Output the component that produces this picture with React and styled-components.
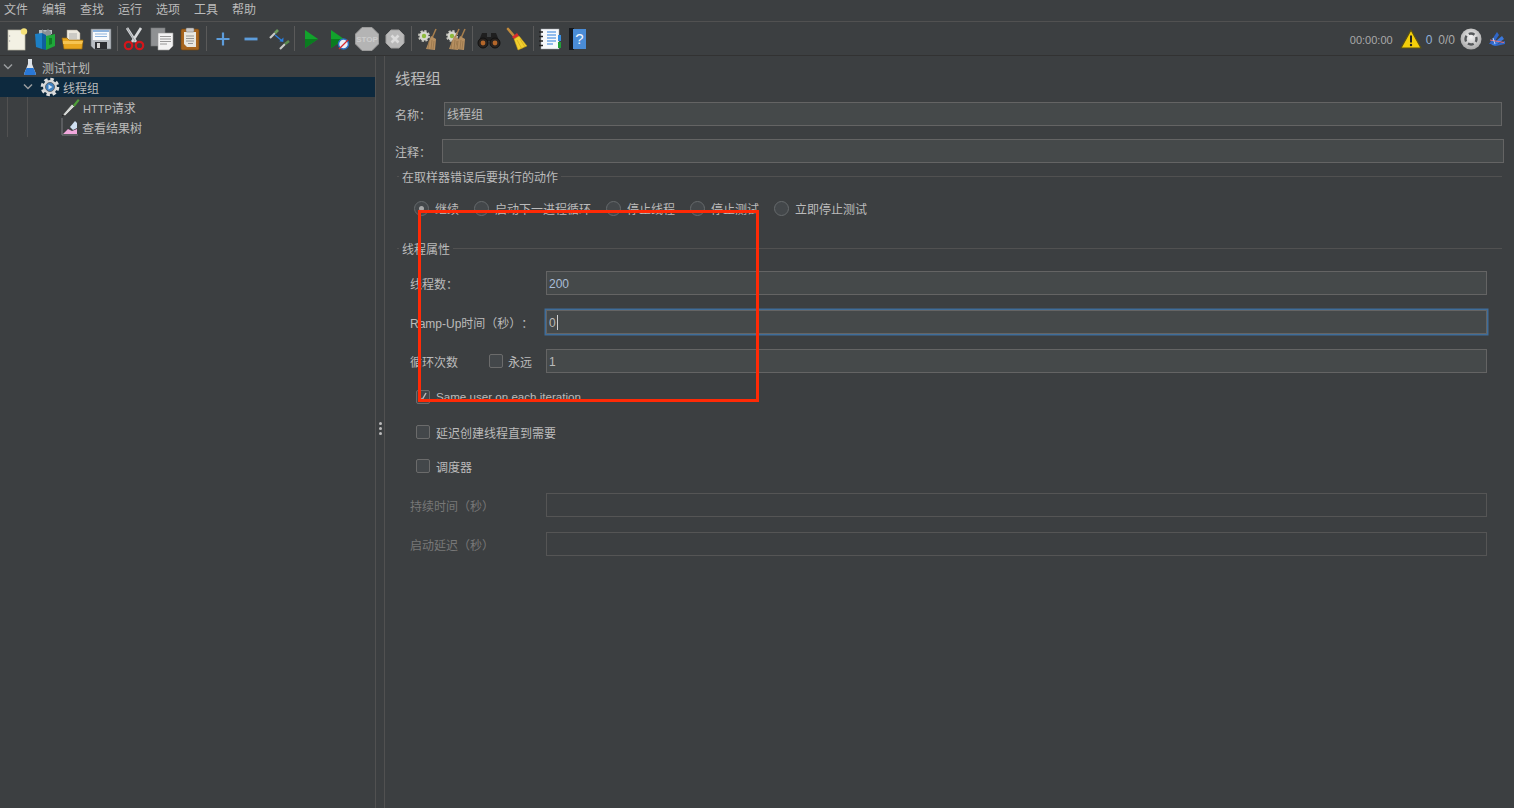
import React from 'react';
import styled, { createGlobalStyle } from 'styled-components';

const GlobalStyle = createGlobalStyle`
html, body {
    margin: 0;
    height: 100%;
    background: #3c3f41;
}
body {
    font-family: "Liberation Sans", "Noto Sans CJK SC", sans-serif;
    font-size: 12px;
    color: #bbbbbb;
    overflow: hidden;
    text-spacing-trim: space-all;
}
`;

const Frame = styled.div`
position: relative;
width: 1514px;
height: 808px;
display: flex;
flex-direction: column;
background: #3c3f41;
`;

const MenuBar = styled.div`
height: 21px;
display: flex;
align-items: center;
gap: 14px;
padding-left: 4px;
border-bottom: 1px solid #515151;
`;

const MenuItem = styled.span`
line-height: 21px;
`;

const ToolBar = styled.div`
height: 33px;
display: flex;
align-items: center;
padding-left: 3px;
border-bottom: 1px solid #323232;
`;

const ToolButton = styled.div`
width: 28px;
height: 28px;
flex: none;
display: flex;
align-items: center;
justify-content: center;
`;

const ToolSep = styled.div`
width: 1px;
height: 25px;
margin: 0 1.9px;
background: #5a5a5a;
`;

const Status = styled.div`
margin-left: auto;
display: flex;
align-items: center;
padding-right: 8px;
`;

const Timer = styled.span`
font-size: 11px;
margin-right: 7px;
padding-top: 2px;
color: #a9a9a9;
`;

const Count = styled.span`
margin-left: ${p => p.$left}px;
margin-right: ${p => p.$right || 0}px;
padding-top: 2px;
color: ${p => p.$blue ? '#8fb0d8' : '#a9a9a9'};
`;

const WingSlot = styled.span`
display: flex;
margin-left: 6px;
`;

const Main = styled.div`
flex: 1;
display: flex;
min-height: 0;
`;

const Tree = styled.div`
width: 375px;
flex: none;
padding-top: 1px;
`;

const TreeRow = styled.div`
height: 20px;
display: flex;
align-items: center;
padding-left: ${p => p.$indent}px;
background: ${p => p.$selected ? '#0d293e' : 'transparent'};
`;

const TreeGuide = styled.div`
margin-left: ${p => p.$left}px;
padding-left: ${p => p.$pad}px;
border-left: 1px solid #515151;
`;

const TreeLabel = styled.span`
display: inline-flex;
align-items: baseline;
margin-left: ${p => p.$gap}px;
white-space: nowrap;
`;

const Latin = styled.span`
font-size: ${p => p.$size}px;
`;

const RaisedText = styled.span`
font-size: 11.6px;
margin-bottom: 2px;
`;

const Splitter = styled.div`
width: 8px;
flex: none;
border-left: 1px solid #515151;
border-right: 1px solid #515151;
display: flex;
flex-direction: column;
align-items: center;
justify-content: center;
gap: 2px;
padding-bottom: 8px;
`;

const Dot = styled.i`
width: 3px;
height: 3px;
border-radius: 50%;
background: #bbbbbb;
`;

const Panel = styled.div`
flex: 1;
min-width: 0;
padding: 0 12px 0 10px;
`;

const Title = styled.div`
font-size: 15.3px;
line-height: 22px;
margin: 12px 0 12px;
`;

const NameRow = styled.div`
display: flex;
align-items: center;
height: 24px;
margin-bottom: ${p => p.$bottom}px;
margin-right: ${p => p.$right}px;
`;

const NameLabel = styled.span`
width: ${p => p.$width}px;
flex: none;
`;

const Field = styled.div`
box-sizing: border-box;
flex: 1;
min-width: 0;
height: 24px;
line-height: ${p => p.$tall ? 25 : 24}px;
padding-left: 2px;
background: ${p => p.$disabled ? 'transparent' : '#45494a'};
border: 1px solid ${p => p.$disabled ? '#555555' : '#646464'};
box-shadow: ${p => p.$focus ? '0 0 0 1.5px #3f6d9a' : 'none'};
color: ${p => p.$blue ? '#a9bdd6' : '#bbbbbb'};
`;

const Caret = styled.span`
display: inline-block;
width: 1px;
height: 15px;
margin-left: 1px;
vertical-align: -3px;
background: #d0d0d0;
`;

const Legend = styled.div`
display: flex;
align-items: center;
height: 16px;
margin-top: ${p => p.$top}px;
margin-left: 2px;
gap: 3px;
&::before {
    content: "";
    width: 2px;
    height: 1px;
    background: #515151;
}
&::after {
    content: "";
    flex: 1;
    height: 1px;
    background: #515151;
}
`;

const RadioRow = styled.div`
display: flex;
align-items: center;
height: 16px;
margin-top: 16px;
padding-left: 19px;
gap: 15px;
`;

const RadioItem = styled.div`
display: flex;
align-items: center;
gap: 6px;
white-space: nowrap;
`;

const RadioMark = styled.span`
box-sizing: border-box;
width: 15px;
height: 15px;
border-radius: 50%;
border: 1px solid #666a6c;
background: #43474a;
display: flex;
align-items: center;
justify-content: center;
&::after {
    content: "";
    display: ${p => p.$on ? 'block' : 'none'};
    width: 5px;
    height: 5px;
    border-radius: 50%;
    background: #a8a8a8;
}
`;

const FormRow = styled.div`
display: grid;
grid-template-columns: 136px 1fr;
align-items: center;
height: 24px;
margin-top: ${p => p.$top}px;
margin-left: 15px;
margin-right: 15px;
color: ${p => p.$disabled ? '#777777' : '#bbbbbb'};
`;

const LoopLabel = styled.div`
display: flex;
align-items: center;
`;

const LoopText = styled.span`
width: 79px;
`;

const CheckRow = styled.div`
display: flex;
align-items: center;
height: 16px;
margin-top: ${p => p.$top}px;
padding-left: 21px;
gap: 6px;
white-space: nowrap;
`;

const CheckBox = styled.span`
box-sizing: border-box;
width: 14px;
height: 14px;
flex: none;
border: 1px solid #6b6b6b;
border-radius: 2px;
background: #43474a;
margin-right: ${p => p.$right || 0}px;
display: flex;
align-items: center;
justify-content: center;
`;

const RedBox = styled.div`
position: absolute;
left: 418px;
top: 210px;
width: 341px;
height: 192px;
box-sizing: border-box;
border: 3px solid #ff2a06;
pointer-events: none;
`;

const NewIcon = () => (
    <svg width="22" height="24" viewBox="0 0 22 24">
        <rect x="2" y="3" width="17" height="20" fill="#f3f1e4" stroke="#bdbbaa" strokeWidth=".7" />
        <circle cx="3.6" cy="9" r=".7" fill="#aaa" /><circle cx="3.6" cy="14" r=".7" fill="#aaa" />
        <circle cx="18" cy="4.5" r="3.2" fill="#f5e27a" />
    </svg>
);

const TemplatesIcon = () => (
    <svg width="24" height="24" viewBox="0 0 24 24">
        <path d="M6 3h13v4H6z" fill="#b7bcc0" />
        <path d="M9 2l3 3 3-3 3 3v4H9z" fill="#8b9296" />
        <path d="M2 7l7-1v16l-6-2z" fill="#1c7fc4" />
        <path d="M9 6l4 2v15l-4-1z" fill="#0f5f9c" />
        <path d="M13 9l9-2v12l-9 4z" fill="#1fa83a" />
        <path d="M16 11h3v6l-3 1z" fill="#0f7d25" />
    </svg>
);

const OpenIcon = () => (
    <svg width="24" height="24" viewBox="0 0 24 24">
        <path d="M6 3h10l3 3v8H6z" fill="#ece9df" stroke="#a59f8c" strokeWidth=".5" />
        <path d="M8 7h8M8 9h8M8 11h8" stroke="#9c9c9c" strokeWidth=".8" />
        <path d="M1 11h5l2 2h14l-1 9H3z" fill="#e8a71f" stroke="#9a6a10" strokeWidth=".7" />
        <path d="M2 14h20l-1 3H2z" fill="#f6c552" />
    </svg>
);

const SaveIcon = () => (
    <svg width="24" height="24" viewBox="0 0 24 24">
        <path d="M2 2h20v20H5l-3-3z" fill="#b9bec4" stroke="#6d7278" strokeWidth=".6" />
        <rect x="4" y="3" width="16" height="10" fill="#fafbfc" />
        <path d="M4 3h16v2H4z" fill="#8db3dd" />
        <path d="M6 7h12M6 9.500h12" stroke="#8db3dd" />
        <rect x="6" y="15" width="12" height="7" fill="#2d2f33" />
        <rect x="8" y="16" width="3" height="5" fill="#d5d5d5" />
    </svg>
);

const CutIcon = () => (
    <svg width="24" height="24" viewBox="0 0 24 24">
        <path d="M5 1l9 14M19 1l-9 14" stroke="#d6d8da" strokeWidth="2.6" fill="none" />
        <path d="M5 1l8 13" stroke="#8b8f93" strokeWidth=".7" fill="none" />
        <circle cx="6.500" cy="18.500" r="3.700" fill="none" stroke="#d3161b" strokeWidth="2.200" />
        <circle cx="17.500" cy="18.500" r="3.700" fill="none" stroke="#d3161b" strokeWidth="2.200" />
    </svg>
);

const CopyIcon = () => (
    <svg width="24" height="24" viewBox="0 0 24 24">
        <rect x="1" y="1" width="14" height="18" fill="#8f9193" stroke="#77797b" strokeWidth=".6" />
        <path d="M8 6h15v13l-4 4H8z" fill="#f3f3f3" stroke="#9a9a9a" strokeWidth=".6" />
        <path d="M10 9.500h11M10 12h11M10 14.500h11M10 17h7" stroke="#8d8d8d" strokeWidth=".9" />
    </svg>
);

const PasteIcon = () => (
    <svg width="22" height="24" viewBox="0 0 22 24">
        <rect x="2" y="2" width="18" height="21" rx="1.500" fill="#a7641c" stroke="#6d4312" strokeWidth=".6" />
        <path d="M5 5h12v15H8l-3-3z" fill="#e9e7df" />
        <rect x="7" y="1" width="8" height="4" rx="1" fill="#c9c9c9" stroke="#777" strokeWidth=".5" />
        <path d="M7 9h8M7 11.500h8M7 14h8M9 16.500h5" stroke="#8d8d8d" strokeWidth=".9" />
    </svg>
);

const PlusIcon = () => (
    <svg width="16" height="16" viewBox="0 0 16 16">
        <path d="M8 1.500v13M1.500 8h13" stroke="#5d9ddb" strokeWidth="2.200" />
    </svg>
);

const MinusIcon = () => (
    <svg width="16" height="16" viewBox="0 0 16 16">
        <path d="M1.500 8h13" stroke="#5d9ddb" strokeWidth="2.800" />
    </svg>
);

const ToggleIcon = () => (
    <svg width="24" height="24" viewBox="0 0 24 24">
        <path d="M3 11l5-5" stroke="#c9cbc8" strokeWidth="2.200" />
        <path d="M8 6l3-3" stroke="#6c9c5c" strokeWidth="2.600" />
        <path d="M13 22l5-5" stroke="#c9cbc8" strokeWidth="2.200" />
        <path d="M18 17l4-3" stroke="#5d8c50" strokeWidth="2.600" />
        <path d="M8 8l6 5" stroke="#2a7fe0" strokeWidth="1.200" />
        <path d="M16.500 10.500l-.2 4.500-4-.7z" fill="#2a7fe0" />
    </svg>
);

const PlayIcon = () => (
    <svg width="24" height="24" viewBox="0 0 24 24">
        <path d="M6 3l13 9-13 9z" fill="#12a32c" />
        <path d="M6 12h13l-13 9z" fill="#0a7c1f" />
    </svg>
);

const PlayNoTimerIcon = () => (
    <svg width="24" height="24" viewBox="0 0 24 24">
        <path d="M4 3l13 9-13 9z" fill="#12a32c" />
        <path d="M4 12h13l-13 9z" fill="#0a7c1f" />
        <circle cx="16.500" cy="17" r="5" fill="#e8eef6" stroke="#2a6fc0" strokeWidth="1.500" />
        <path d="M12 22l9-9" stroke="#d8262b" strokeWidth="1.300" />
    </svg>
);

const StopIcon = () => (
    <svg width="24" height="24" viewBox="0 0 24 24">
        <path d="M7 .500h10l6.500 6.500v10l-6.500 6.500H7L.500 17V7z" fill="#b4b4b4" stroke="#9a9a9a" />
        <text x="12" y="15" textAnchor="middle" fontSize="8" fontWeight="700" fill="#cdcdcd" fontFamily="Liberation Sans, sans-serif">STOP</text>
    </svg>
);

const ShutdownIcon = () => (
    <svg width="20" height="20" viewBox="0 0 20 20">
        <path d="M6 1h8l5 5v8l-5 5H6l-5-5V6z" fill="#b9b9b9" stroke="#a0a0a0" />
        <path d="M6.500 6.500l7 7M13.500 6.500l-7 7" stroke="#dcdcdc" strokeWidth="2.600" />
    </svg>
);

const Broom = ({ x = 0 }) => (
    <g transform={`translate(${x} 0)`}>
        <path d="M20 2l-4 9" stroke="#a97f4d" strokeWidth="1.500" />
        <path d="M15 9l5 3-1 11-9-1z" fill="#b68f60" />
        <path d="M13 14l-1 8M16 13l-1 9M18 14l-1 8" stroke="#8a6a42" strokeWidth=".6" />
    </g>
);

const SmallGear = () => (
    <g>
        <circle cx="8" cy="9" r="4.500" fill="#d8d8d0" stroke="#c8c8c0" strokeWidth="3" strokeDasharray="2 1.500" />
        <circle cx="8" cy="9" r="4" fill="#d8d8d0" />
        <circle cx="8" cy="9" r="2.200" fill="#8dbb3c" />
    </g>
);

const ClearIcon = () => (
    <svg width="24" height="24" viewBox="0 0 24 24"><SmallGear /><Broom /></svg>
);

const ClearAllIcon = () => (
    <svg width="24" height="24" viewBox="0 0 24 24"><SmallGear /><Broom x={-5} /><Broom x={1} /></svg>
);

const BinocularsIcon = () => (
    <svg width="24" height="24" viewBox="0 0 24 24">
        <path d="M5 6h5v4h4V6h5l4 10H14v-2h-4v2H1z" fill="#1f1f1f" />
        <circle cx="6" cy="16" r="5" fill="#2a2420" stroke="#111" />
        <circle cx="18" cy="16" r="5" fill="#2a2420" stroke="#111" />
        <circle cx="6" cy="16" r="2.400" fill="#b5672a" />
        <circle cx="18" cy="16" r="2.400" fill="#b5672a" />
    </svg>
);

const SweepIcon = () => (
    <svg width="24" height="24" viewBox="0 0 24 24">
        <path d="M3 2l6 7" stroke="#c08a3c" strokeWidth="2.600" strokeLinecap="round" />
        <path d="M7 10l5-4 2 3-5 3z" fill="#d92c2c" />
        <path d="M9 12l5-3 8 10-9 4z" fill="#f2cf2e" stroke="#c9a012" strokeWidth=".5" />
        <path d="M12 13l5 9M15 12l5 8" stroke="#c9a012" strokeWidth=".6" />
    </svg>
);

const FunctionIcon = () => (
    <svg width="24" height="24" viewBox="0 0 24 24">
        <rect x="3" y="2" width="18" height="20" fill="#f7f9fb" stroke="#9aa0a6" strokeWidth=".5" />
        <rect x="20" y="8" width="3" height="6" fill="#3a8ee0" />
        <rect x="20" y="15" width="3" height="6" fill="#22a03a" />
        <path d="M9 5h9M9 8h9M9 11h9M9 14h9M9 17h6" stroke="#2d7fdc" strokeWidth="1.100" />
        <path d="M1 5h4M1 9.500h4M1 14h4M1 18.500h4" stroke="#222" strokeWidth="1.600" />
    </svg>
);

const HelpIcon = () => (
    <svg width="20" height="24" viewBox="0 0 20 24">
        <rect x="1" y="1" width="5" height="22" fill="#15181c" />
        <rect x="5" y="2" width="13" height="20" fill="#4a8cd6" />
        <text x="11.500" y="17" textAnchor="middle" fontSize="15" fill="#f2f6fb" fontFamily="Liberation Sans, sans-serif">?</text>
    </svg>
);

const WarnIcon = () => (
    <svg width="22" height="20" viewBox="0 0 22 20">
        <path d="M11 1l10 18H1z" fill="#f4cf0a" stroke="#5b5212" strokeWidth="1.200" strokeLinejoin="round" />
        <path d="M11 6.500v7" stroke="#222" strokeWidth="2" />
        <circle cx="11" cy="16" r="1.200" fill="#222" />
    </svg>
);

const DiscIcon = () => (
    <svg width="22" height="22" viewBox="0 0 22 22">
        <defs>
            <radialGradient id="discFill" cx="50%" cy="40%" r="60%">
                <stop offset="0%" stopColor="#f4f4f4" />
                <stop offset="100%" stopColor="#a8a8a8" />
            </radialGradient>
        </defs>
        <circle cx="11" cy="11" r="10.500" fill="url(#discFill)" />
        <circle cx="11" cy="11" r="5.500" fill="none" stroke="#55585a" strokeWidth="2.400" strokeDasharray="6 2.640" strokeDashoffset="3" />
    </svg>
);

const WingIcon = () => (
    <svg width="18" height="18" viewBox="0 0 18 18">
        <path d="M1 14L9 2l2 3-6 9z" fill="#2f66c8" />
        <path d="M3 15L14 6l2 3-8 6z" fill="#3b78dc" />
        <path d="M4 16l13-5v3l-9 2z" fill="#2f66c8" />
        <path d="M2 10l14 2.500" stroke="#e2707a" strokeWidth="1" />
        <path d="M5 8l2 6" stroke="#dfe7f5" strokeWidth=".8" />
    </svg>
);

const Chevron = styled.svg`
width: 10px;
height: 8px;
flex: none;
`;

const ExpandIcon = () => (
    <Chevron viewBox="0 0 10 8">
        <path d="M1 1.500l4 4 4-4" fill="none" stroke="#9a9d9f" strokeWidth="1.500" />
    </Chevron>
);

const FlaskIcon = () => (
    <svg width="14" height="18" viewBox="0 0 14 18">
        <path d="M5 1h4v5l4 10-1 1H2l-1-1 4-10z" fill="#dfe3e8" />
        <path d="M3.500 10h7l2.500 6-1 1H2l-1-1z" fill="#2a78d6" />
    </svg>
);

const GearIcon = () => (
    <svg width="20" height="20" viewBox="0 0 20 20">
        <circle cx="10" cy="10" r="7.500" fill="none" stroke="#dcdcdc" strokeWidth="3.600" strokeDasharray="3.300 2.600" />
        <circle cx="10" cy="10" r="7" fill="#d8d8d8" />
        <circle cx="10" cy="10" r="4.500" fill="#3f7fbe" stroke="#5c6770" />
        <path d="M8.500 7.500l4 2.500-4 2.500z" fill="#d6e6f5" />
    </svg>
);

const PipetteIcon = () => (
    <svg width="19" height="19" viewBox="0 0 19 19">
        <path d="M1 18l3-2" stroke="#1d1d1d" strokeWidth="1" />
        <path d="M2 16.500L11 6l2.500 2.500L4 18z" fill="#d5d8d6" stroke="#2e2e2e" strokeWidth=".6" />
        <path d="M12 7l5-6 1.500 1.500-5 6.500z" fill="#4f9f3a" />
    </svg>
);

const GraphIcon = () => (
    <svg width="18" height="18" viewBox="0 0 18 18">
        <path d="M1 0v17h16" fill="none" stroke="#7a7d80" strokeWidth="1" />
        <path d="M2 16l5-5 4 2 5-2v5z" fill="#f0a8dc" />
        <path d="M9 9l5-6 2 2v5l-4 2z" fill="#cfe0f2" />
    </svg>
);

const toolGroups = [
    [NewIcon, TemplatesIcon, OpenIcon, SaveIcon],
    [CutIcon, CopyIcon, PasteIcon],
    [PlusIcon, MinusIcon, ToggleIcon],
    [PlayIcon, PlayNoTimerIcon, StopIcon, ShutdownIcon],
    [ClearIcon, ClearAllIcon],
    [BinocularsIcon, SweepIcon],
    [FunctionIcon, HelpIcon],
];

const menus = ['文件', '编辑', '查找', '运行', '选项', '工具', '帮助'];
const radios = ['继续', '启动下一进程循环', '停止线程', '停止测试', '立即停止测试'];

const App = () => (
    <Frame>
        <GlobalStyle />
        <MenuBar>
            {menus.map(m => <MenuItem key={m}>{m}</MenuItem>)}
        </MenuBar>
        <ToolBar>
            {toolGroups.map((group, i) => (
                <React.Fragment key={i}>
                    {i > 0 && <ToolSep />}
                    {group.map((Icon, j) => <ToolButton key={j}><Icon /></ToolButton>)}
                </React.Fragment>
            ))}
            <Status>
                <Timer>00:00:00</Timer>
                <WarnIcon />
                <Count $left={4} $blue>0</Count>
                <Count $left={6} $right={5}>0/0</Count>
                <DiscIcon />
                <WingSlot><WingIcon /></WingSlot>
            </Status>
        </ToolBar>
        <Main>
            <Tree>
                <TreeRow $indent={3}>
                    <ExpandIcon />
                    <TreeLabel $gap={10}><FlaskIcon /></TreeLabel>
                    <TreeLabel $gap={5}>测试计划</TreeLabel>
                </TreeRow>
                <TreeRow $indent={23} $selected>
                    <ExpandIcon />
                    <TreeLabel $gap={7}><GearIcon /></TreeLabel>
                    <TreeLabel $gap={3}>线程组</TreeLabel>
                </TreeRow>
                <TreeGuide $left={7} $pad={19}>
                    <TreeGuide $left={0} $pad={33}>
                        <TreeRow $indent={0}>
                            <PipetteIcon />
                            <TreeLabel $gap={3}><Latin $size={11}>HTTP</Latin>请求</TreeLabel>
                        </TreeRow>
                        <TreeRow $indent={0}>
                            <GraphIcon />
                            <TreeLabel $gap={3}>查看结果树</TreeLabel>
                        </TreeRow>
                    </TreeGuide>
                </TreeGuide>
            </Tree>
            <Splitter>
                <Dot /><Dot /><Dot />
            </Splitter>
            <Panel>
                <Title>线程组</Title>
                <NameRow $bottom={13} $right={0}>
                    <NameLabel $width={49}>名称：</NameLabel>
                    <Field $tall>线程组</Field>
                </NameRow>
                <NameRow $bottom={0} $right={-2}>
                    <NameLabel $width={47}>注释：</NameLabel>
                    <Field />
                </NameRow>
                <Legend $top={5}>在取样器错误后要执行的动作</Legend>
                <RadioRow>
                    {radios.map((r, i) => (
                        <RadioItem key={r}>
                            <RadioMark $on={i === 0} />
                            {r}
                        </RadioItem>
                    ))}
                </RadioRow>
                <Legend $top={24}>线程属性</Legend>
                <FormRow $top={15}>
                    <span>线程数：</span>
                    <Field $blue>200</Field>
                </FormRow>
                <FormRow $top={15}>
                    <span>Ramp-Up时间（秒）：</span>
                    <Field $focus>0<Caret /></Field>
                </FormRow>
                <FormRow $top={15}>
                    <LoopLabel>
                        <LoopText>循环次数</LoopText>
                        <CheckBox $right={5} />
                        永远
                    </LoopLabel>
                    <Field>1</Field>
                </FormRow>
                <CheckRow $top={16}>
                    <CheckBox>
                        <svg width="12" height="12" viewBox="0 0 12 12">
                            <path d="M3 6.500l2 2.500 4-7" fill="none" stroke="#b8b8b8" strokeWidth="1.500" />
                        </svg>
                    </CheckBox>
                    <RaisedText>Same user on each iteration</RaisedText>
                </CheckRow>
                <CheckRow $top={19}>
                    <CheckBox />
                    延迟创建线程直到需要
                </CheckRow>
                <CheckRow $top={18}>
                    <CheckBox />
                    调度器
                </CheckRow>
                <FormRow $top={19} $disabled>
                    <span>持续时间（秒）</span>
                    <Field $disabled />
                </FormRow>
                <FormRow $top={15} $disabled>
                    <span>启动延迟（秒）</span>
                    <Field $disabled />
                </FormRow>
            </Panel>
        </Main>
        <RedBox />
    </Frame>
);

export default App;
